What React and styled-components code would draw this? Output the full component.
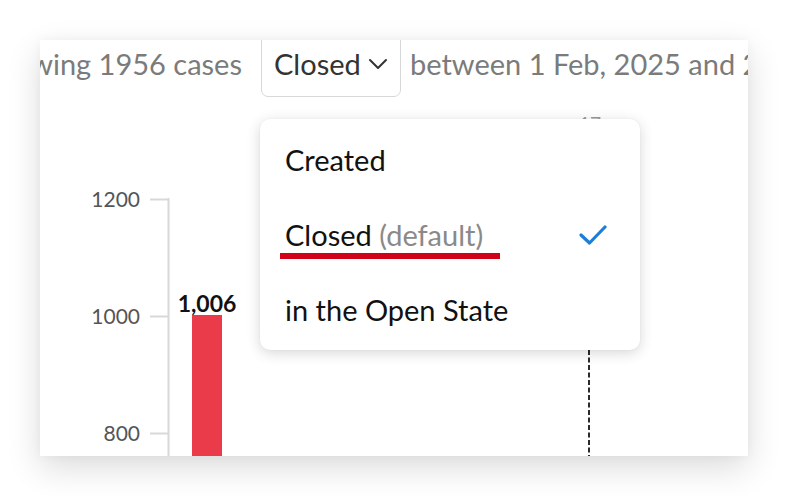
import React from "react";
import styled, { createGlobalStyle } from "styled-components";

const Global = createGlobalStyle`
  html, body { margin: 0; padding: 0; background: #ffffff; }
  body { font-family: Lato, "Noto Sans", sans-serif; }
`;

const Page = styled.div`
  width: 788px;
  height: 496px;
  padding: 40px;
  box-sizing: border-box;
  background: #fff;
`;

const Card = styled.div`
  position: relative;
  width: 708px;
  height: 416px;
  background: #fff;
  overflow: hidden;
  box-shadow: 0 12px 32px rgba(0, 0, 0, 0.14), 0 0 10px rgba(0, 0, 0, 0.04);
  display: flex;
  flex-direction: column;
`;

const Header = styled.div`
  display: flex;
  align-items: center;
  height: 47px;
  white-space: nowrap;
  font-size: 29px;
  color: #7b7b7b;
  flex: none;
`;

const Lead = styled.div`
  width: 202px;
  flex: none;
  display: flex;
  justify-content: flex-end;
  margin-right: 19px;
`;

const Select = styled.div`
  flex: none;
  width: 140px;
  height: 67px;
  box-sizing: border-box;
  border: 1.5px solid #d8d8d8;
  border-radius: 0 0 7px 7px;
  padding: 0 12px;
  display: flex;
  align-items: center;
  justify-content: space-between;
  color: #333;
`;

const Tail = styled.span`
  margin-left: 9px;
`;

const Chart = styled.svg`
  display: block;
  margin-top: 13px;
  flex: none;
`;

const Menu = styled.div`
  position: absolute;
  left: 220px;
  top: 79px;
  width: 380px;
  box-sizing: border-box;
  padding: 3px 0;
  background: #fff;
  border-radius: 10px;
  box-shadow: 0 3px 14px rgba(0, 0, 0, 0.16), 0 0 2px rgba(0, 0, 0, 0.06);
  font-size: 29px;
  color: #111;
`;

const Item = styled.div`
  height: 75px;
  display: flex;
  align-items: center;
  justify-content: space-between;
  padding: 0 33px 0 25px;
`;

const Label = styled.span`
  position: relative;
  ${(p) =>
    p.$marked &&
    `
    &::after {
      content: "";
      position: absolute;
      left: -5px;
      right: -17px;
      bottom: -7px;
      height: 6px;
      background: #d2011a;
    }
  `}
`;

const Hint = styled.span`
  color: #8a8a8a;
`;

const Chevron = () => (
  <svg width="20" height="12" viewBox="0 0 20 12">
    <path d="M2 2 L10 10 L18 2" fill="none" stroke="#333" strokeWidth="2" strokeLinecap="round" strokeLinejoin="round" />
  </svg>
);

const Check = () => (
  <svg width="28" height="22" viewBox="0 0 28 22">
    <path d="M2 11 L10.5 19 L26 3" fill="none" stroke="#1b7fd8" strokeWidth="3.2" strokeLinecap="round" strokeLinejoin="round" />
  </svg>
);

const ticks = [
  { v: "1200", y: 99.5 },
  { v: "1000", y: 216.5 },
  { v: "800", y: 333.5 },
];

const items = [
  { label: "Created" },
  { label: "Closed", hint: "(default)", checked: true },
  { label: "in the Open State" },
];

export default function App() {
  return (
    <>
      <Global />
      <Page>
        <Card>
          <Header>
            <Lead>Showing 1956 cases</Lead>
            <Select>
              <span>Closed</span>
              <Chevron />
            </Select>
            <Tail>between 1 Feb, 2025 and 23 Feb, 2025</Tail>
          </Header>
          <Chart width="708" height="356" viewBox="0 0 708 356">
            <text x="539" y="30.5" fontSize="19" fill="#999" fontFamily="Lato, sans-serif">17</text>
            <line x1="549" y1="40" x2="549" y2="356" stroke="#2a2a2a" strokeWidth="2" strokeDasharray="5 2.5" />
            {ticks.map((t) => (
              <g key={t.v}>
                <text x="100" y={t.y + 7} textAnchor="end" fontSize="21" fill="#555" fontFamily="Lato, sans-serif">
                  {t.v}
                </text>
                <line x1="110" y1={t.y} x2="128" y2={t.y} stroke="#d8d8d8" strokeWidth="2" />
              </g>
            ))}
            <line x1="128.5" y1="98" x2="128.5" y2="356" stroke="#d8d8d8" strokeWidth="2" />
            <rect x="152" y="215" width="30" height="141" fill="#ea3b4b" />
            <text x="167" y="212" textAnchor="middle" fontSize="23" fontWeight="700" fill="#111" fontFamily="Lato, sans-serif">
              1,006
            </text>
          </Chart>
          <Menu>
            {items.map((it) => (
              <Item key={it.label}>
                <Label $marked={it.checked}>
                  {it.label}
                  {it.hint && <Hint> {it.hint}</Hint>}
                </Label>
                {it.checked && <Check />}
              </Item>
            ))}
          </Menu>
        </Card>
      </Page>
    </>
  );
}
